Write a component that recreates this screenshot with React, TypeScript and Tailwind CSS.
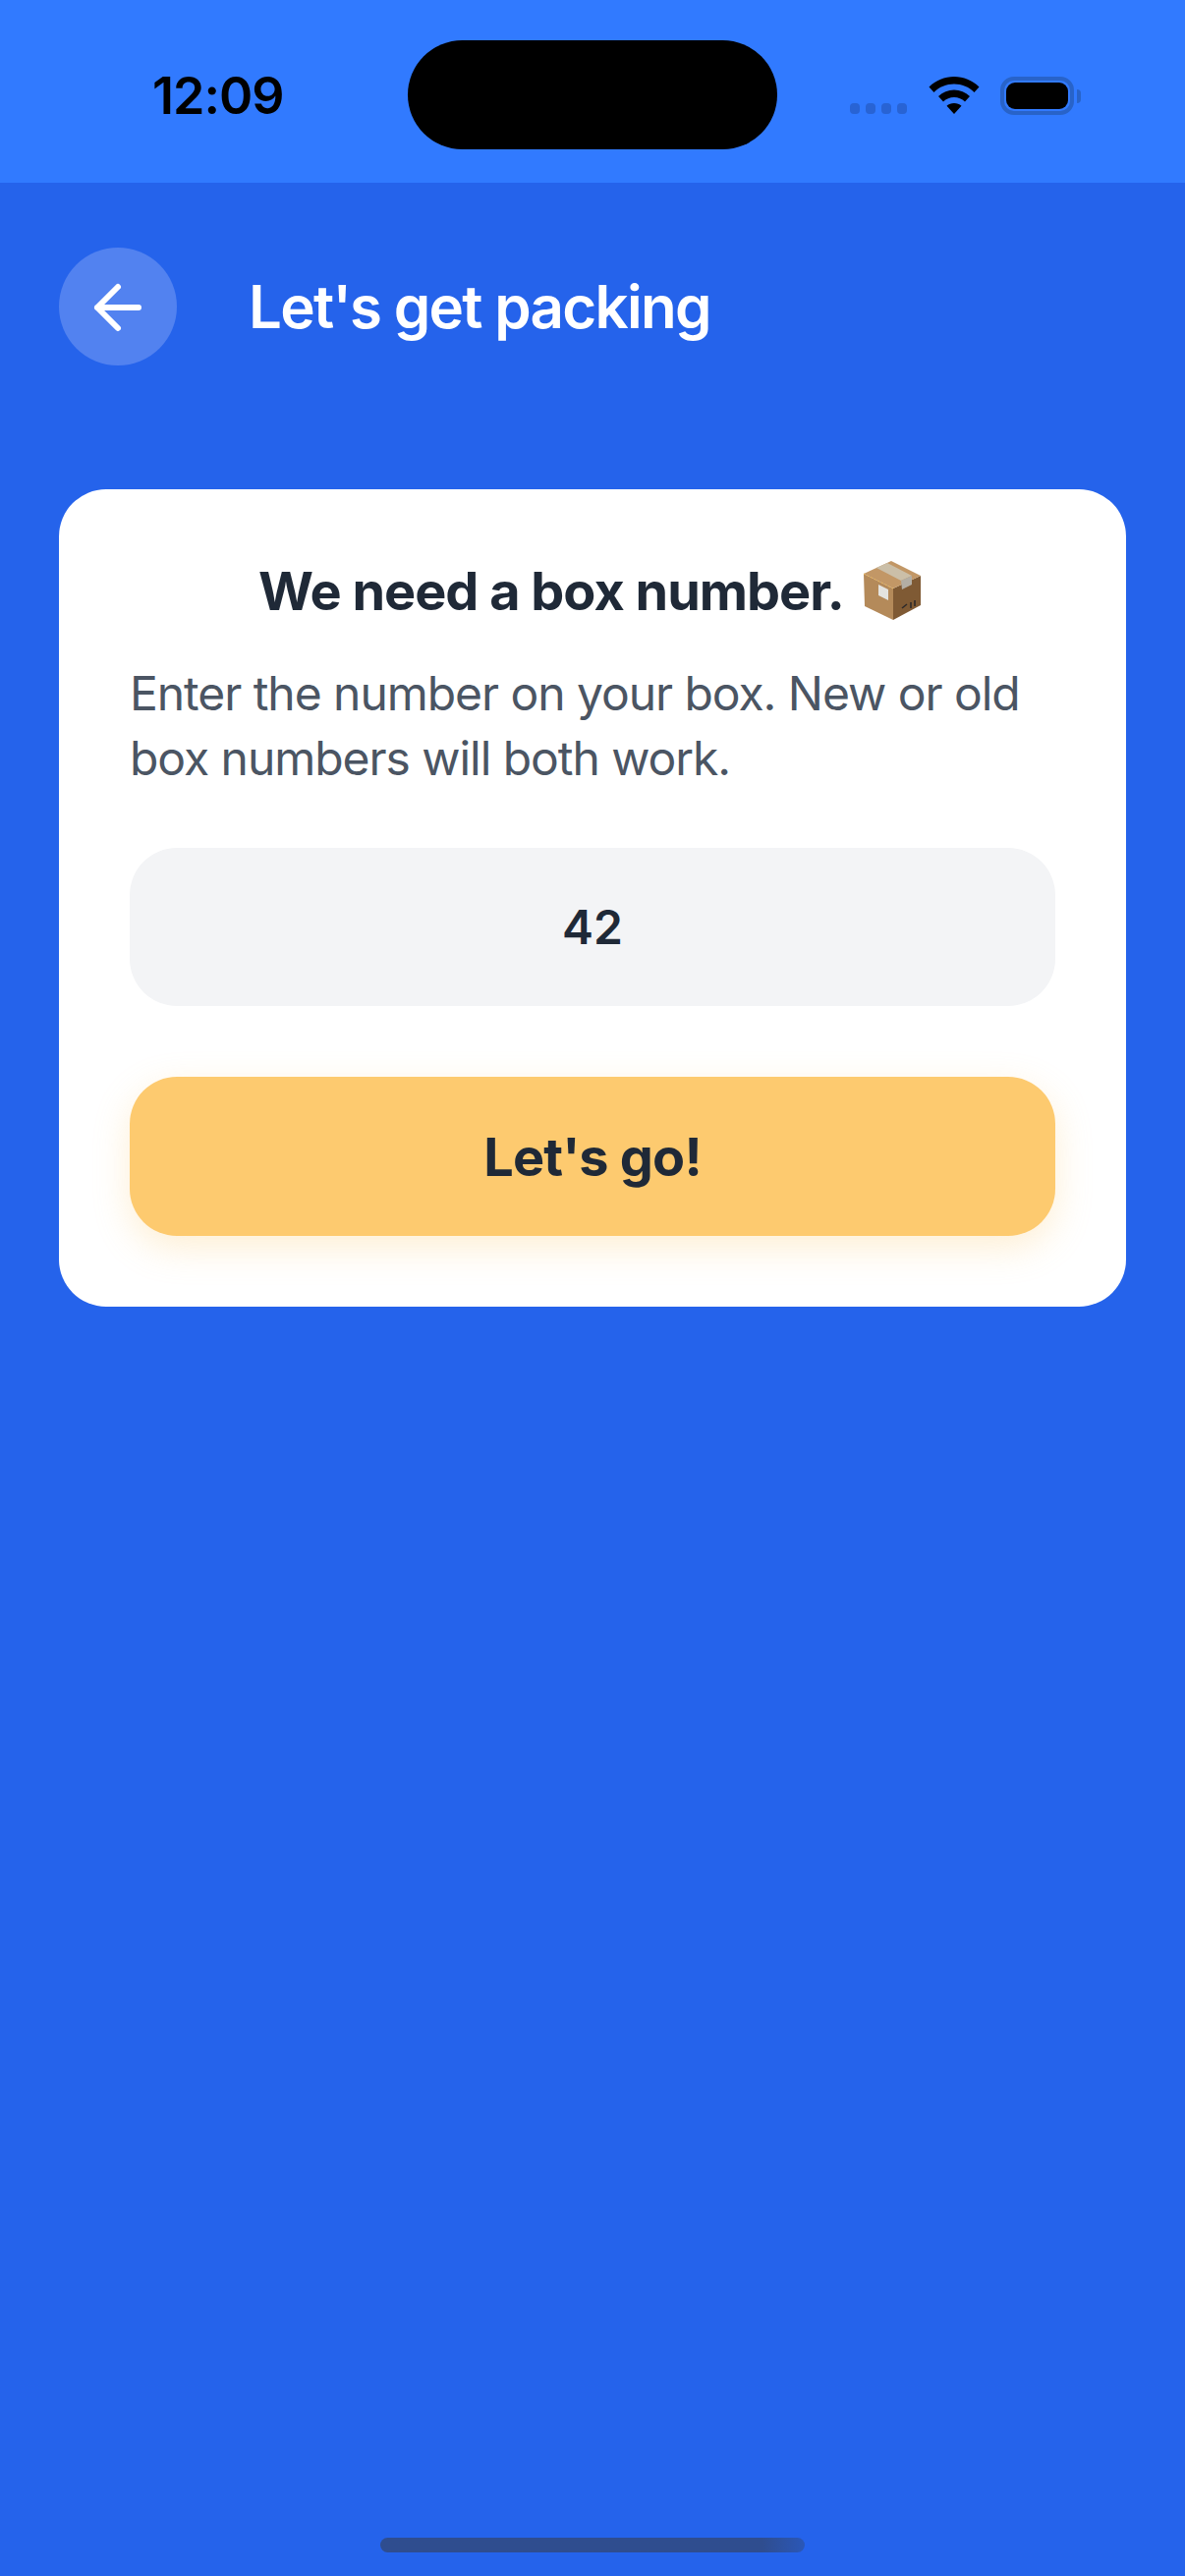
import React from "react";

function BoxEmoji() {
  return (
    <svg width="66" height="66" viewBox="0 0 66 66" className="shrink-0">
      <path d="M4 15 L34 30 V62 L5 48 Z" fill="#b48a5a" />
      <path d="M34 30 L62 17 V47 L34 62 Z" fill="#7f5a34" />
      <path d="M4 15 L32 2 L62 17 L34 30 Z" fill="#c29766" />
      <path d="M17 9 L28 4 L53 17 L42 22 Z" fill="#cbbfa8" />
      <path d="M42 22 L53 17 V26 L43 31 Z" fill="#b3aea4" />
      <path d="M19 26 L29 31 V42 L19 37 Z" fill="#e4e4e0" />
      <path d="M4 15 L34 30" stroke="#e7b45a" strokeWidth="1" strokeDasharray="2 2" fill="none" />
      <path d="M43 50 L48 46 M52 44 V50 M56 42 V48" stroke="#2e2a2a" strokeWidth="1.6" fill="none" />
    </svg>
  );
}

export default function App() {
  return (
    <div className="flex min-h-[2622px] w-[1206px] flex-col bg-[#2563eb] font-['Inter',sans-serif]">
      <div className="flex h-[186px] items-start bg-[#317aff] pl-[155px]">
        <span className="mt-[66px] w-[260px] text-[52px] leading-[63px] font-semibold tracking-[-1px] text-black">12:09</span>
        <div className="mt-[41px] h-[111px] w-[376px] rounded-[56px] bg-black" />
        <div className="ml-[74px] flex items-start">
          <div className="mt-[105px] flex gap-[6px]">
            {[0, 1, 2, 3].map((i) => (
              <div key={i} className="h-[11px] w-[10px] rounded-[4px] bg-[#2863d4]" />
            ))}
          </div>
          <svg width="52" height="38" viewBox="0 0 52 38" className="mt-[78px] ml-[22px]">
            <path d="M26 0 C35.500 0 44.500 3.600 51.500 10.500 L46.500 16 C41 10.500 33.800 7.600 26 7.600 C18.200 7.600 11 10.500 5.500 16 L0.500 10.500 C7.500 3.600 16.500 0 26 0 Z" fill="#000" />
            <path d="M26 13.500 C32 13.500 37.600 15.800 42 20 L37 25.500 C34 22.700 30.200 21 26 21 C21.800 21 18 22.700 15 25.500 L10 20 C14.400 15.800 20 13.500 26 13.500 Z" fill="#000" />
            <path d="M26 27 C28.900 27 31.500 28 33.500 29.800 L26 38 L18.500 29.800 C20.500 28 23.100 27 26 27 Z" fill="#000" />
          </svg>
          <div className="mt-[78px] ml-[21px] flex h-[39px] w-[75px] items-center justify-center rounded-[14px] border-[4px] border-[#2863c9]">
            <div className="h-[27px] w-[63px] rounded-[9px] bg-black" />
          </div>
          <div className="mt-[91px] ml-[3px] h-[14px] w-[4px] rounded-r-[4px] bg-[#2863c9]" />
        </div>
      </div>

      <div className="flex items-center px-[60px] pt-[66px]">
        <button className="flex h-[120px] w-[120px] items-center justify-center rounded-full bg-[#5282f0]">
          <svg width="54" height="54" viewBox="0 0 54 54" fill="none" stroke="white" strokeWidth="6" strokeLinecap="round" strokeLinejoin="round">
            <path d="M48 28 H6 M27 7 L6 28 L27 49" />
          </svg>
        </button>
        <h1 className="ml-[73px] text-[60px] leading-[84px] font-semibold tracking-[-1.7px] text-white">Let's get packing</h1>
      </div>

      <div className="mx-[60px] mt-[126px] flex flex-col rounded-[48px] bg-white p-[72px] pt-[68px]">
        <h2 className="flex items-center justify-center gap-[16px] pr-[2px] text-[54px] leading-[72px] font-bold tracking-[-1px] text-[#1f2937]">
          We need a box number. <BoxEmoji />
        </h2>
        <p className="mt-[35px] text-[48px] leading-[66px] font-normal tracking-[-1.05px] text-[#4b5563]">
          Enter the number on your box. New or old box numbers will both work.
        </p>
        <div className="mt-[58px] flex h-[161px] items-center justify-center rounded-[48px] bg-[#f3f4f6] text-[48px] font-semibold text-[#1f2937]">
          42
        </div>
        <button className="mt-[72px] flex h-[162px] items-center justify-center rounded-[48px] bg-[#fdca6f] text-[54px] font-bold tracking-[-0.8px] text-[#1f2937] shadow-[0_12px_36px_rgba(253,202,111,0.3)]">
          Let's go!
        </button>
      </div>

      <div className="mt-auto mb-[24px] flex justify-center">
        <div className="h-[15px] w-[432px] rounded-full bg-gradient-to-r from-[#2f4d8f] via-[#2f4d8f] via-[90%] to-[#2a57b8]" />
      </div>
    </div>
  );
}
